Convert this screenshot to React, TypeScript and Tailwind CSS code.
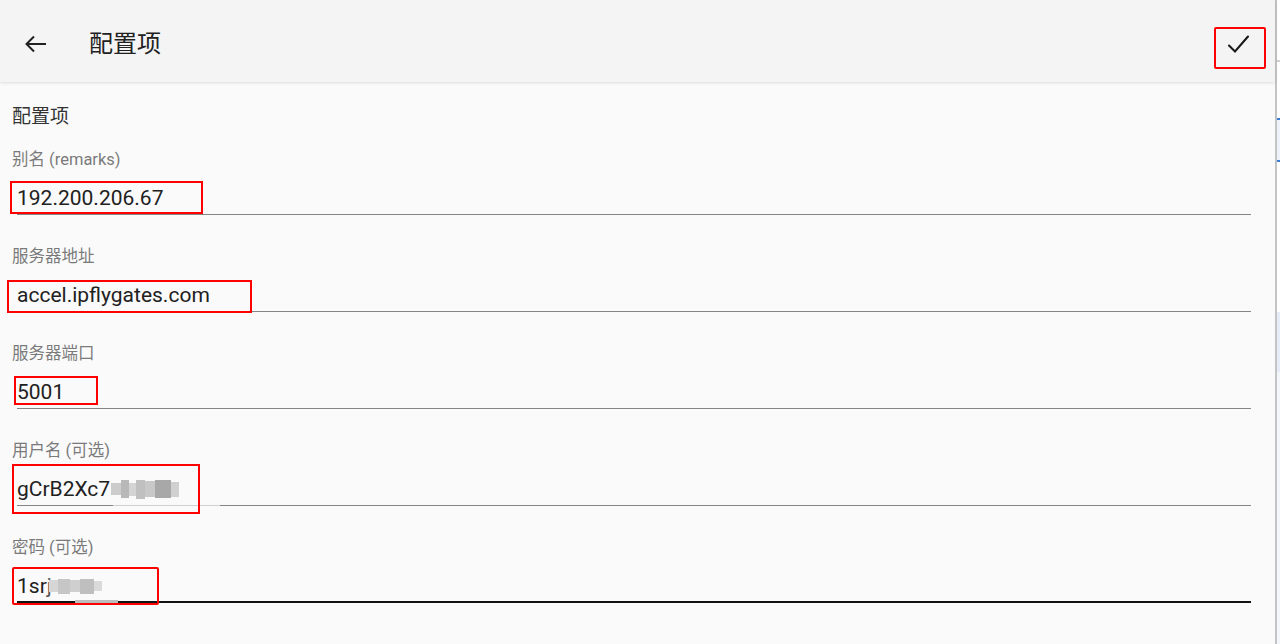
import React from "react";

const font = { fontFamily: 'Roboto, "Noto Sans CJK SC", "Noto Sans", sans-serif' };

function Field({
  label,
  children,
  last,
  extra,
}: {
  label: string;
  children: React.ReactNode;
  last?: boolean;
  extra?: React.ReactNode;
}) {
  return (
    <div className="flex flex-col">
      <div className="h-[20px] leading-[20px] text-[16.5px] text-[#7a7a7a] pl-[12px]">{label}</div>
      <div className="mt-[14px] ml-[17px] mr-[24px] h-[31px] flex items-start relative">
        <div className="h-[28px] leading-[28px] text-[21px] text-[#212121] flex items-center">{children}</div>
        <div
          className={
            last
              ? "absolute left-0 right-0 bottom-0 h-[2px] bg-[#111111]"
              : "absolute left-0 right-0 bottom-0 h-[1.5px] bg-[#858585]"
          }
        />
        {extra}
      </div>
    </div>
  );
}

export default function App() {
  return (
    <div className="relative w-[1280px] h-[644px] overflow-hidden flex bg-[#fafafa]" style={font}>
      <div className="w-[1275px] h-full flex flex-col bg-[#fafafa]">
        <div className="h-[82px] pt-[6px] bg-[#f4f4f4] flex items-center shadow-[0_1px_3px_rgba(0,0,0,0.12)] relative z-10">
          <div className="w-[72px] flex justify-center">
            <svg width="24" height="24" viewBox="0 0 24 24" fill="none" stroke="#212121" strokeWidth="2" strokeLinecap="butt" strokeLinejoin="miter">
              <path d="M22 12H3.5" />
              <path d="M10 4.5L2.5 12L10 19.5" />
            </svg>
          </div>
          <div className="ml-[17px] text-[24px] text-[#212121] leading-[30px]">配置项</div>
          <div className="flex-1" />
          <div className="w-[48px] flex justify-center mr-[13px]">
            <svg width="24" height="24" viewBox="0 0 24 24" fill="none" stroke="#1a1a1a" strokeWidth="2.1" strokeLinecap="round" strokeLinejoin="miter">
              <path d="M3 13.5L9 19.5L22 4.5" />
            </svg>
          </div>
        </div>
        <div className="mt-[23px] pl-[12px] h-[24px] leading-[24px] text-[19px] text-[#333333]">配置项</div>
        <div className="mt-[21px] flex flex-col gap-[32px]">
          <Field label="别名 (remarks)">192.200.206.67</Field>
          <Field label="服务器地址">accel.ipflygates.com</Field>
          <Field label="服务器端口">5001</Field>
          <Field
            label="用户名 (可选)"
            extra={<div className="absolute left-[96px] w-[107px] bottom-0 h-[1.5px] bg-[#d0d0d0]" />}
          >
            <span>gCrB2Xc7</span>
            <span className="flex items-center ml-[1px] blur-[0.6px]">
              <span className="w-[10px] h-[12px] bg-[#cccccc]" />
              <span className="w-[8px] h-[18px] bg-[#b8b8b8]" />
              <span className="w-[7px] h-[13px] bg-[#d4d4d4]" />
              <span className="w-[9px] h-[19px] bg-[#c0c0c0]" />
              <span className="w-[10px] h-[16px] bg-[#c8c8c8]" />
              <span className="w-[16px] h-[18px] bg-[#a8a8a8]" />
              <span className="w-[8px] h-[15px] bg-[#d0d0d0]" />
            </span>
          </Field>
          <Field
            label="密码 (可选)"
            last
            extra={<div className="absolute left-[58px] w-[43px] bottom-0 h-[3px] bg-[#bdbdbd]" />}
          >
            <span>1sr</span>
            <span className="text-[#555]">j</span>
            <span className="flex items-center ml-[-3px] blur-[0.6px]">
              <span className="w-[9px] h-[12px] bg-[#d6d6d6]" />
              <span className="w-[12px] h-[15px] bg-[#c6c6c6]" />
              <span className="w-[10px] h-[12px] bg-[#cfcfcf]" />
              <span className="w-[14px] h-[15px] bg-[#bfbfbf]" />
              <span className="w-[8px] h-[10px] bg-[#dadada]" />
            </span>
          </Field>
        </div>
      </div>
      <div className="w-[2px] h-full bg-[#c4c4c4]" />
      <div className="w-[3px] h-full bg-[#f7f9fc] flex flex-col">
        <div className="h-[60px] bg-[#ffffff]" />
        <div className="h-[2px] bg-[#d0d0d0]" />
        <div className="h-[56px] bg-[#ffffff]" />
        <div className="h-[2px] bg-[#3b7dd8]" />
        <div className="h-[40px] bg-[#eef3fb]" />
        <div className="h-[2px] bg-[#3b7dd8]" />
        <div className="h-[150px] bg-[#ffffff]" />
        <div className="h-[60px] bg-[#e6ecf8]" />
        <div className="flex-1 bg-[#f3f6fb]" />
      </div>

      {/* red annotation boxes */}
      <div className="absolute left-[1214px] top-[27px] w-[52px] h-[42px] border-2 border-[#ff0000] rounded-[2px] z-20" />
      <div className="absolute left-[10px] top-[181px] w-[193px] h-[33px] border-2 border-[#ff0000] z-20" />
      <div className="absolute left-[7px] top-[280px] w-[245px] h-[33px] border-2 border-[#ff0000] z-20" />
      <div className="absolute left-[14px] top-[376px] w-[84px] h-[29px] border-2 border-[#ff0000] z-20" />
      <div className="absolute left-[12px] top-[464px] w-[188px] h-[50px] border-2 border-[#ff0000] z-20" />
      <div className="absolute left-[12px] top-[567px] w-[147px] h-[38px] border-2 border-[#ff0000] rounded-[2px] z-20" />
    </div>
  );
}
